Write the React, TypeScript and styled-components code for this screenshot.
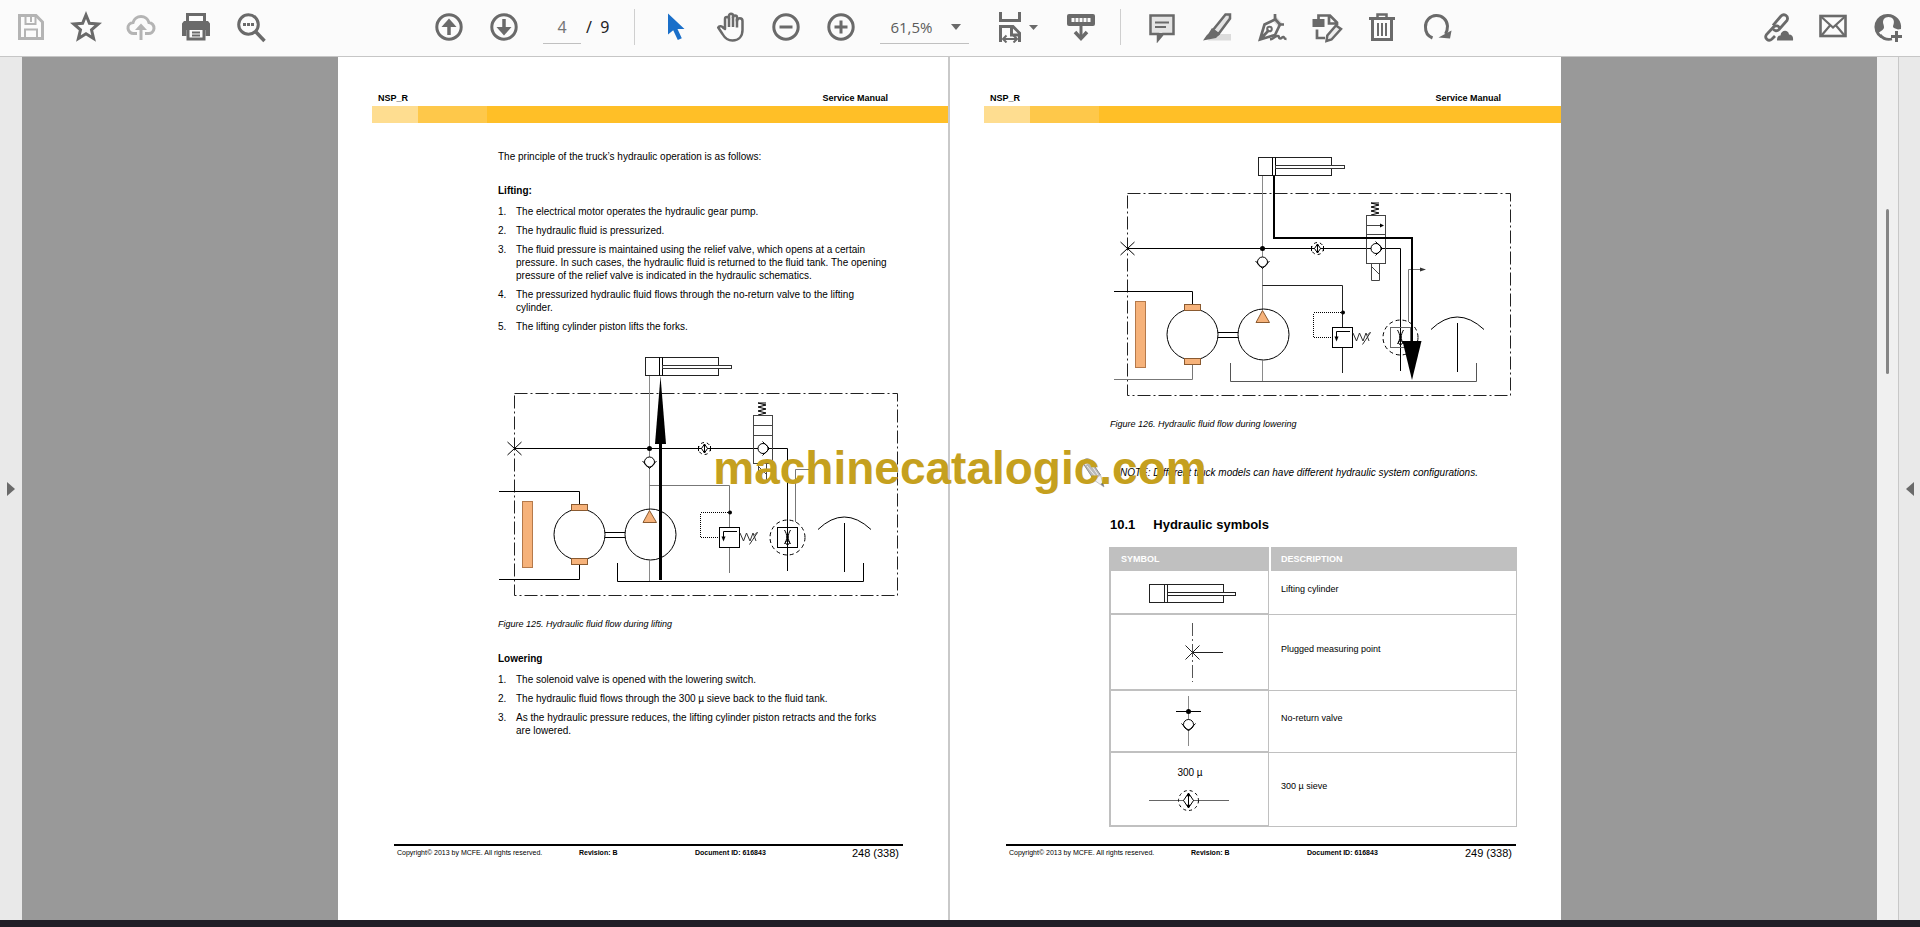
import React, { useState } from "react";
import styled, { createGlobalStyle } from "styled-components";

const GlobalStyle = createGlobalStyle`
  *, *::before, *::after { box-sizing: border-box; }
  body { margin: 0; background: #999999; }
  body, button, input, select { font-family: "Liberation Sans", Arial, sans-serif; }
`;

const INK = "#6a6a6a";
const PALE = "#b4b4b4";
const FILL = "#f6b27a";

const Shell = styled.div`
  display: flex;
  flex-direction: column;
  min-height: 100vh;
`;

/* ---------- toolbar ---------- */

const Toolbar = styled.header`
  display: flex;
  align-items: center;
  height: 57px;
  padding: 0 16px 2px 15px;
  background: #fbfbfb;
  border-bottom: 1px solid #c6c6c6;
`;

const ToolGroup = styled.div<{ $push?: boolean }>`
  display: flex;
  align-items: center;
  gap: 23px;
  margin-left: ${(p) => (p.$push ? "auto" : "0")};
`;

const MainTools = styled(ToolGroup)`
  margin-left: 166px;
`;

const ToolButton = styled.button<{ $pale?: boolean; $active?: boolean }>`
  display: flex;
  width: 32px;
  height: 32px;
  padding: 0;
  border: 0;
  background: none;
  color: ${(p) => (p.$active ? "#1a6fc9" : p.$pale ? PALE : INK)};
`;

const FitButton = styled(ToolButton)`
  width: 48px;
  margin-left: 2px;
`;

const Separator = styled.div`
  width: 1px;
  height: 36px;
  margin-right: 2px;
  background: #cfcfcf;
`;

const PageField = styled.div`
  display: flex;
  align-items: center;
  gap: 5px;
  padding-right: 2px;
  font: 16px "Noto Sans", "Open Sans", sans-serif;
  color: #222222;
`;

const PageInput = styled.input`
  width: 38px;
  height: 34px;
  padding: 0;
  border: 0;
  border-bottom: 1px solid #c0c0c0;
  background: transparent;
  text-align: center;
  font: 16px "Noto Sans", "Open Sans", sans-serif;
  color: #757575;
`;

const ZoomBox = styled.div`
  position: relative;
  display: flex;
  width: 89px;
`;

const ZoomSelect = styled.select`
  width: 100%;
  height: 34px;
  padding: 0 10px;
  border: 0;
  border-bottom: 1px solid #c0c0c0;
  border-radius: 0;
  background: transparent;
  appearance: none;
  font: 15px "Open Sans", "Noto Sans", sans-serif;
  color: #5c5c5c;
`;

const ZoomCaret = styled.svg`
  position: absolute;
  right: 8px;
  top: 14px;
  pointer-events: none;
`;

/* ---------- viewer ---------- */

const Viewer = styled.main`
  position: relative;
  display: flex;
  flex: 1;
  background: #999999;
`;

const Rail = styled.button<{ $right?: boolean }>`
  display: flex;
  align-items: center;
  justify-content: center;
  width: 22px;
  padding: 0;
  border: 0;
  border-left: ${(p) => (p.$right ? "1px solid #c8c8c8" : "0")};
  background: #e9e9e9;
`;

const Spread = styled.div`
  display: flex;
  flex: 1;
  justify-content: center;
`;

const ScrollTrack = styled.div`
  width: 21px;
  padding: 152px 9px 0;
  background: #f0f0f0;
`;

const ScrollThumb = styled.div`
  height: 165px;
  border-radius: 2px;
  background: #858585;
`;

const Watermark = styled.div`
  position: absolute;
  inset: 0;
  display: flex;
  align-items: center;
  justify-content: center;
  padding-bottom: 42px;
  pointer-events: none;
  font-size: 46px;
  font-weight: bold;
  color: #c5a01e;
`;

const Taskbar = styled.footer`
  height: 7px;
  background: #201f27;
`;

/* ---------- document page ---------- */

const Sheet = styled.article<{ $second?: boolean }>`
  display: flex;
  flex-direction: column;
  flex: 0 1 ${(p) => (p.$second ? "613px" : "610px")};
  border-left: ${(p) => (p.$second ? "2px solid #c9c9c9" : "0")};
  background: #ffffff;
  color: #000000;
`;

const SheetHeader = styled.header`
  display: flex;
  justify-content: space-between;
  padding: 35px 60px 2px 40px;
  font-size: 9px;
  line-height: 12px;
  font-weight: bold;
`;

const Stripe = styled.div`
  display: grid;
  grid-template-columns: 46px 69px 1fr;
  height: 17px;
  margin-left: 34px;
`;

const StripePart = styled.div<{ $color: string }>`
  background: ${(p) => p.$color};
`;

const SheetBody = styled.div`
  padding: 27px 44px 0 160px;
  font-size: 10px;
  line-height: 13px;
`;

const Para = styled.p`
  margin: 0;
`;

const SubHeading = styled.h3`
  margin: 21px 0 8px;
  font-size: 10px;
  line-height: 13px;
`;

const Steps = styled.ol`
  display: flex;
  flex-direction: column;
  gap: 6px;
  margin: 0;
  padding: 0 15px 0 0;
  list-style: none;
  counter-reset: step;
`;

const Step = styled.li`
  display: grid;
  grid-template-columns: 18px 1fr;
  counter-increment: step;
  &::before { content: counter(step) "."; }
`;

const Figure = styled.figure<{ $top: number }>`
  margin: ${(p) => p.$top}px 0 0;
  svg { display: block; }
`;

const Caption = styled.figcaption`
  margin-top: 19px;
  font-size: 9px;
  font-style: italic;
`;

const Note = styled.p`
  display: flex;
  align-items: center;
  gap: 15px;
  height: 31px;
  margin: 26px 0 0 -29px;
  font-style: italic;
  white-space: nowrap;
`;

const SectionHeading = styled.h2`
  display: flex;
  gap: 18px;
  margin: 28px 0 13px;
  font-size: 13px;
  line-height: 18px;
`;

const SymbolTable = styled.table`
  width: 408px;
  margin-left: -1px;
  border-spacing: 0;
  table-layout: fixed;
  font-size: 9px;
`;

const HeadCell = styled.th<{ $wide?: boolean }>`
  width: ${(p) => (p.$wide ? "auto" : "160px")};
  height: 24px;
  padding: 0 10px 0 ${(p) => (p.$wide ? "10px" : "12px")};
  background: #c0c0c0;
  border-left: ${(p) => (p.$wide ? "2px solid #ffffff" : "0")};
  color: #ffffff;
  text-align: left;
`;

const SymbolCell = styled.td`
  padding: 0;
  border: solid #c0c0c0;
  border-width: 0 1px 2px 2px;
  svg { display: block; }
`;

const TextCell = styled.td`
  padding: 0 12px 6px;
  border: solid #c0c0c0;
  border-width: 0 1px 1px 0;
`;

const SheetFooter = styled.footer`
  display: grid;
  grid-template-columns: 182px 116px 1fr auto;
  align-items: center;
  margin: auto 45px 60px 56px;
  padding: 0 4px 0 3px;
  border-top: 2px solid #000000;
  font-size: 7px;
  line-height: 14px;
`;

const PageNumber = styled.span`
  font-size: 11px;
`;

/* ---------- toolbar drawings ---------- */

const Icon = ({ children, w = 32 }: { children: React.ReactNode; w?: number }) => (
  <svg width={w} height="32" viewBox={`0 0 ${w} 32`} fill="none" stroke="currentColor" strokeWidth="3" aria-hidden="true">
    {children}
  </svg>
);

const SaveIcon = () => (
  <Icon>
    <path d="M4.500 4.500H21l6.500 6.500V27.500H4.500Z" strokeWidth="3" />
    <path d="M10.500 5v8h10V5M10 27v-8.500h12V27" strokeWidth="2" />
    <path d="M16 6v5" strokeWidth="2" />
  </Icon>
);
const StarIcon = () => (
  <Icon><path d="M16 4l3.400 8.300 8.900.7-6.800 5.800 2.100 8.700L16 22.800 8.400 27.500l2.100-8.700L3.700 13l8.900-.7Z" strokeWidth="3" /></Icon>
);
const CloudIcon = () => (
  <Icon>
    <path d="M12 22.500H9a5.500 5.500 0 0 1-1-11 8.300 8.300 0 0 1 16 0 5.500 5.500 0 0 1-1 11h-3" strokeWidth="3" />
    <path d="M16 29V17" />
    <path d="M10 19l6-6.500 6 6.500Z" fill="currentColor" stroke="none" />
  </Icon>
);
const PrintIcon = () => (
  <Icon>
    <path d="M7.500 11v-7.500h17v7.500" />
    <path d="M4 10h24l2 2.500V25h-4.500v-6h-19v6H2V12.500Z" fill="currentColor" stroke="none" />
    <path d="M8 18.500v9.500h16v-9.500" strokeWidth="3" />
    <path d="M12 21.500h8M12 24.500h8" strokeWidth="2" />
  </Icon>
);
const SearchIcon = () => (
  <Icon>
    <circle cx="13.500" cy="13.500" r="9.800" />
    <path d="M20.500 20.500l9 9.500" strokeWidth="3.500" />
    <path d="M8 13.500h3M12 13.500h3M16 13.500h3" />
  </Icon>
);
const ArrowIcon = ({ down }: { down?: boolean }) => (
  <Icon>
    <circle cx="16" cy="16" r="12.200" />
    <g transform={down ? "rotate(180 16 16)" : undefined}>
      <path d="M16 24V12" strokeWidth="3.500" />
      <path d="M8.500 16l7.500-8.500 7.500 8.500Z" fill="currentColor" stroke="none" />
    </g>
  </Icon>
);
const CursorIcon = () => (
  <Icon><path d="M8 2.500v21l5.200-4.300 4.600 9.800 4-1.700-4.300-9.300H24.500Z" fill="currentColor" stroke="none" /></Icon>
);
const HandIcon = () => (
  <Icon>
    <path d="M10 18V8a2 2 0 0 1 4 0V4.800a2 2 0 0 1 4 0V6.500a2 2 0 0 1 4 0V10a2 2 0 0 1 5.500 0v9c0 6-3.500 10.500-10 10.500-5.500 0-8-3-10-6.500l-4.300-6.500c1-2 4-1.500 5.300.5Z" strokeWidth="2.500" strokeLinejoin="round" />
    <path d="M14 7.500V16M18 6v10M22 8v8.500" strokeWidth="2.500" />
  </Icon>
);
const RoundIcon = ({ plus }: { plus?: boolean }) => (
  <Icon>
    <circle cx="16" cy="16" r="12.200" />
    <path d={plus ? "M9.500 16h13M16 9.500v13" : "M9.500 16h13"} />
  </Icon>
);
const FitIcon = () => (
  <Icon w={44}>
    <path d="M6.500 1v8.500h19V1" />
    <path d="M6.500 31V15.500H19l6.500 6.500v9M17.500 16v8h8" strokeWidth="3" />
    <path d="M9 28h14M12.500 24.500L9 28l3.500 3.500M19.500 24.500L23 28l-3.500 3.500" strokeWidth="2" />
    <path d="M35 14h9l-4.500 5Z" fill="currentColor" stroke="none" />
  </Icon>
);
const ScrollIcon = () => (
  <Icon>
    <rect x="2" y="3" width="28" height="12" rx="2" fill="currentColor" stroke="none" />
    <path d="M6.500 9h19" stroke="#fbfbfb" strokeWidth="4" strokeDasharray="3 1" />
    <path d="M16 15v12" />
    <path d="M10 21l6 6.500 6-6.500" strokeWidth="3.500" />
  </Icon>
);
const CommentIcon = () => (
  <Icon>
    <path d="M4.500 4.500h23v18.500H17l-5 6v-6H4.500Z" fill="#e4e4e4" strokeWidth="2.500" />
    <path d="M12 22h6l-6 7Z" fill="currentColor" stroke="none" />
    <path d="M9 11.500h14M9 16h11" strokeWidth="2" />
  </Icon>
);
const MarkerIcon = () => (
  <Icon>
    <path d="M11 23h19v6.500H7Z" fill="#dcdcdc" stroke="none" />
    <path d="M24.500 3.500h4.500v4L17.500 23l-5.500-4Z" fill="#e4e4e4" strokeWidth="2.500" />
    <path d="M11 17l8 6-4 4-13 2.500 3.500-5 2-2Z" fill="currentColor" stroke="none" />
  </Icon>
);
const SignIcon = () => (
  <Icon>
    <path d="M20 5l7 8-4 4-7-8Z" fill="#dedede" stroke="none" />
    <path d="M19 3v5.500L8.500 13.500 4 28.500l15-4.500 5-10.500h4M4 28.500l9-9.500" strokeWidth="2.700" />
    <circle cx="13.500" cy="18" r="2.300" strokeWidth="2" />
    <path d="M19 8l5 5.500" strokeWidth="2.700" />
    <path d="M14 28.500c4-1 5-4 8-3.500 2 .3 0 2.500 2 2.500s2-2 3.500-1.500 0 2 3 2" strokeWidth="2.500" />
  </Icon>
);
const EditIcon = () => (
  <Icon>
    <path d="M7.500 8V4.500H19l7 7V14M18 5v7.500h8" strokeWidth="2.700" />
    <rect x="1.500" y="8" width="12" height="8" fill="currentColor" stroke="none" />
    <path d="M6 18.500V27h8" strokeWidth="2.700" />
    <path d="M25 14.500l5 3.500-9.500 10.500-5 1.500.8-5.500Z" fill="#eeeeee" strokeWidth="2.500" />
  </Icon>
);
const TrashIcon = () => (
  <Icon>
    <path d="M3 7.500h26" />
    <path d="M11.500 7V3.500h9V7" strokeWidth="2.500" />
    <path d="M6.500 9v19.500h19V9" />
    <path d="M12 12v13M16 12v13M20 12v13" strokeWidth="2" />
  </Icon>
);
const RotateIcon = () => (
  <Icon>
    <path d="M11.500 27A11.500 11.500 0 0 1 4.500 16 11 11 0 0 1 26.500 15c0 3-.5 5.500-2 8" />
    <path d="M30.500 19.500l-1.500 8-11.500-1Z" fill="currentColor" stroke="none" />
  </Icon>
);
const LinkIcon = () => (
  <Icon>
    <path d="M11 14.500l8-9.500c3-3 8 0 6 4.500l-8 9c-2 2-4.500 1.500-6-.5" strokeWidth="2.800" />
    <path d="M18 17.500c-1-3-4.500-3.500-6.500-1.500l-7 7.500c-2.500 4 2 7.500 5.500 4.500l3-3" strokeWidth="2.800" />
    <path d="M15 29.500c0-4 1.500-5 3.500-5 .5-6 8-6 8.500-1 3 0 4.500 2 4 6Z" fill="currentColor" stroke="none" />
  </Icon>
);
const MailIcon = () => (
  <Icon>
    <rect x="3.500" y="5" width="25" height="20" strokeWidth="2.600" />
    <path d="M4.500 6L16 16.500 27.500 6M4.500 24.500l8.500-10M27.500 24.500l-8.500-10" strokeWidth="2.200" />
  </Icon>
);
const UserIcon = () => (
  <Icon>
    <path d="M20 28A12.200 12.200 0 0 1 8 24" strokeWidth="2.800" />
    <path fillRule="evenodd" d="M16 3a13 13 0 0 1 13 15l-3 .5-4-1.500c-1.500-1-1-2-.5-3.500 1.500-4.500-1-7.500-5-7.500s-6.500 3-5 7.500c.7 2.500 1 4-1 5.500L7 21.500l3.500 4.500-2 1A13 13 0 0 1 16 3Z" fill="currentColor" stroke="none" />
    <path d="M19 25.500h11M24.500 20v11" strokeWidth="3" />
  </Icon>
);

/* ---------- schematics ---------- */

const Sieve = ({ x, y, r }: { x: number; y: number; r: number }) => (
  <g>
    <circle cx={x} cy={y} r={r} fill="none" strokeDasharray="3 3" />
    <path d={`M${x} ${y - r * 0.75}L${x + r * 0.5} ${y}L${x} ${y + r * 0.75}L${x - r * 0.5} ${y}Z`} fill="#fff" />
    <path d={`M${x} ${y - r * 0.7}V${y + r * 0.7}`} />
    <path d={`M${x - 1.5} ${y - r * 0.4}L${x} ${y - r * 0.7}L${x + 1.5} ${y - r * 0.4}M${x - 1.5} ${y + r * 0.4}L${x} ${y + r * 0.7}L${x + 1.5} ${y + r * 0.4}`} />
  </g>
);

const CheckValve = ({ x, y }: { x: number; y: number }) => (
  <g>
    <circle cx={x} cy={y} r="5" fill="#fff" />
    <path d={`M${x - 7} ${y - 1}L${x} ${y + 6.5}L${x + 7} ${y - 1}`} fill="none" />
  </g>
);

const Schematic = ({ lowering }: { lowering?: boolean }) => (
  <svg
    width="404"
    height="244"
    viewBox={`${lowering ? 17 : 18} 10 404 244`}
    fill="none"
    stroke="#000"
    role="img"
    aria-label={lowering ? "Fluid flow during lowering" : "Fluid flow during lifting"}
  >
    <rect x="34.500" y="48.500" width="383" height="202" stroke="#222" strokeDasharray="13 3 2 3" />
    <rect x="165.500" y="12.500" width="73" height="18" stroke="#222" />
    <path d="M179.500 12.500v18M182.500 12.500v18" />
    <rect x="182.500" y="20.500" width="69" height="3" fill="#fff" stroke="#333" />
    <path d="M169.500 31v134M169.500 215.500v21" stroke="#8a8a8a" />
    <path d="M34.500 103.500h273V226" />
    <path d="M27.500 97l14 13M41.500 97l-14 13" />
    <circle cx="169.500" cy="103.500" r="2.500" fill="#000" stroke="none" />
    <CheckValve x={169.5} y={117} />
    <Sieve x={224.5} y={103.5} r={6} />
    <path d="M218.500 101v5M230.500 101v5" />
    <path d="M278 70l8-2-8-2 8-2-8-2 8-2-8-2h8" />
    <rect x="273.500" y="70.500" width="19" height="48" stroke="#444" />
    <path d={lowering ? "M273.500 80.500h14M273.500 89.500h19" : "M273.500 80.500h19M273.500 90.500h19"} stroke="#444" />
    {lowering && <path d="M287 78.500l4 2-4 2Z" fill="#000" stroke="none" />}
    <path d="M278.500 118.500v17h8v-17M279 122l7 7" stroke="#444" />
    <circle cx="283" cy="103.500" r="5" fill="#fff" />
    <path d="M282.500 96.500l7 7-7 7" />
    <path d="M169.500 140.500h80v42M249.500 202.500V228" stroke={lowering ? "#222" : "#777"} />
    <path d="M249.500 167.500h-29v25h19" strokeDasharray="1 1" shapeRendering="crispEdges" />
    <circle cx="250" cy="167.500" r="2" fill="#000" stroke="none" />
    <rect x="239.500" y="182.500" width="20" height="20" />
    <path d="M257 186.500h-13.500V195" />
    <path d="M241.500 191.500h4l-2 5Z" fill="#000" stroke="none" />
    <path d="M260 188l3.500 8 3-8 3.500 8 3-8 3 8M269.500 199.500l8-12M274.500 190l3-3" stroke="#333" />
    <circle cx="307.500" cy="192.500" r="17.500" strokeDasharray="4 3" />
    <rect x="297.500" y="182.500" width="20" height="20" stroke={lowering ? "#666" : "#000"} />
    <path d="M304.500 185c3 5 3 9 0 14M310.500 185c-3 5-3 9 0 14" />
    <circle cx="307.500" cy="197.500" r="2" />
    <path d="M315.500 177v-52.500h14" stroke="#777" />
    {lowering && <path d="M327 122.500l6 2-6 2Z" fill="#333" stroke="none" />}
    <path d="M338 184.500q26-25 53 0M364.500 178v49" />
    <path d="M137.500 218v18.500h246V218" stroke={lowering ? "#555" : "#000"} />
    <path d={lowering ? "M21 146.500h78.500V160" : "M19 146.500h80.500V160"} />
    <path d={lowering ? "M99.500 219v15.500H21" : "M99.500 219v15.500H19"} stroke={lowering ? "#777" : "#000"} />
    <circle cx="99.500" cy="189.500" r="25.500" fill="#fff" />
    <rect x="91.500" y="159.500" width="16" height="6" fill={FILL} stroke="#8a5a30" />
    <rect x="91.500" y="213.500" width="16" height="6" fill={FILL} stroke="#8a5a30" />
    <rect x="42.500" y="156.500" width="10" height="66" fill={FILL} stroke="#b5794a" />
    <path d="M125 187.500h20M125 192.500h20" />
    <circle cx="170.500" cy="189.500" r="25.500" />
    <path d="M169.500 165.500l-6.500 12h13.500Z" fill={FILL} stroke="#8a5a30" />
    {lowering ? (
      <>
        <path d="M181 31v62h138v104" strokeWidth="2" />
        <path d="M309.500 196h19L319 235Z" fill="#000" stroke="none" />
      </>
    ) : (
      <>
        <path d="M180.500 98v137" strokeWidth="3" />
        <path d="M180.500 31l5.500 68h-11Z" fill="#000" stroke="none" />
      </>
    )}
  </svg>
);

const CylinderSymbol = () => (
  <svg width="157" height="42" fill="none" stroke="#222" aria-hidden="true">
    <rect x="38.500" y="13.500" width="74" height="18" />
    <path d="M53.500 13.500v18M56.500 13.500v18" />
    <rect x="56.500" y="21.500" width="68" height="3" fill="#fff" />
  </svg>
);
const MeasuringSymbol = () => (
  <svg width="157" height="74" fill="none" stroke="#222" aria-hidden="true">
    <path d="M81.500 8v59" stroke="#555" strokeDasharray="13 3 2 3" />
    <path d="M81.500 37.500H112M74.500 30.500l14 14M88.500 30.500l-14 14" />
  </svg>
);
const ValveSymbol = () => (
  <svg width="157" height="60" fill="none" stroke="#000" aria-hidden="true">
    <path d="M77.500 5v50" stroke="#8a8a8a" />
    <path d="M65 20.500h25" />
    <circle cx="77.500" cy="20.500" r="2.500" fill="#000" stroke="none" />
    <CheckValve x={77.5} y={33.5} />
  </svg>
);
const SieveSymbol = () => (
  <svg width="157" height="72" fill="none" stroke="#000" aria-hidden="true">
    <text x="79" y="23" textAnchor="middle" fontSize="10" fill="#000" stroke="none">300 µ</text>
    <path d="M38 47.500h80" stroke="#666" />
    <Sieve x={77.5} y={47.5} r={10} />
  </svg>
);

const Pencil = () => (
  <svg width="24" height="31" viewBox="0 0 24 31" fill="#b9b9b9" stroke="#8d8d8d" aria-hidden="true">
    <path d="M1.500 5.500Q4 0 9 2.500L19.500 18 13 23Z" />
    <path d="M4 8l8-5M6 9l10 12M9 6l8 12" stroke="#eeeeee" />
    <path d="M13 23l6.500-5L23 30Z" fill="#f3f3f3" stroke="#c5c5c5" />
    <path d="M19.500 27l2.500-1.500 1 4.500Z" fill="#777" stroke="none" />
  </svg>
);

const symbols = [
  { label: "Lifting cylinder", drawing: <CylinderSymbol /> },
  { label: "Plugged measuring point", drawing: <MeasuringSymbol /> },
  { label: "No-return valve", drawing: <ValveSymbol /> },
  { label: "300 µ sieve", drawing: <SieveSymbol /> },
];

const ManualPage = ({ number, second, children }: { number: number; second?: boolean; children: React.ReactNode }) => (
  <Sheet $second={second}>
    <SheetHeader>
      <span>NSP_R</span>
      <span>Service Manual</span>
    </SheetHeader>
    <Stripe>
      <StripePart $color="#fedd90" />
      <StripePart $color="#fec84a" />
      <StripePart $color="#ffbf27" />
    </Stripe>
    <SheetBody>{children}</SheetBody>
    <SheetFooter>
      <span>Copyright© 2013 by MCFE. All rights reserved.</span>
      <b>Revision: B</b>
      <b>Document ID: 616843</b>
      <PageNumber>{number} (338)</PageNumber>
    </SheetFooter>
  </Sheet>
);

export default function App() {
  const [page, setPage] = useState("4");
  return (
    <Shell>
      <GlobalStyle />
      <Toolbar>
        <ToolGroup>
          <ToolButton $pale aria-label="Save"><SaveIcon /></ToolButton>
          <ToolButton aria-label="Star"><StarIcon /></ToolButton>
          <ToolButton $pale aria-label="Upload"><CloudIcon /></ToolButton>
          <ToolButton aria-label="Print"><PrintIcon /></ToolButton>
          <ToolButton aria-label="Find"><SearchIcon /></ToolButton>
        </ToolGroup>
        <MainTools>
          <ToolButton aria-label="Previous page"><ArrowIcon /></ToolButton>
          <ToolButton aria-label="Next page"><ArrowIcon down /></ToolButton>
          <PageField>
            <PageInput aria-label="Page number" value={page} onChange={(e) => setPage(e.target.value)} />
            <span>/&nbsp; 9</span>
          </PageField>
          <Separator />
          <ToolButton $active aria-label="Select"><CursorIcon /></ToolButton>
          <ToolButton aria-label="Pan"><HandIcon /></ToolButton>
          <ToolButton aria-label="Zoom out"><RoundIcon /></ToolButton>
          <ToolButton aria-label="Zoom in"><RoundIcon plus /></ToolButton>
          <ZoomBox>
            <ZoomSelect aria-label="Zoom level" defaultValue="61,5%">
              <option>61,5%</option>
              <option>100%</option>
            </ZoomSelect>
            <ZoomCaret width="10" height="6"><path d="M0 0h10L5 6Z" fill={INK} /></ZoomCaret>
          </ZoomBox>
          <FitButton aria-label="Fit page"><FitIcon /></FitButton>
          <ToolButton aria-label="Scrolling mode"><ScrollIcon /></ToolButton>
          <Separator />
          <ToolButton aria-label="Comment"><CommentIcon /></ToolButton>
          <ToolButton aria-label="Highlight"><MarkerIcon /></ToolButton>
          <ToolButton aria-label="Sign"><SignIcon /></ToolButton>
          <ToolButton aria-label="Edit page"><EditIcon /></ToolButton>
          <ToolButton aria-label="Delete"><TrashIcon /></ToolButton>
          <ToolButton aria-label="Rotate"><RotateIcon /></ToolButton>
        </MainTools>
        <ToolGroup $push>
          <ToolButton aria-label="Share link"><LinkIcon /></ToolButton>
          <ToolButton aria-label="Send by email"><MailIcon /></ToolButton>
          <ToolButton aria-label="Add people"><UserIcon /></ToolButton>
        </ToolGroup>
      </Toolbar>

      <Viewer>
        <Rail aria-label="Open left pane">
          <svg width="8" height="14"><path d="M0 0v14l8-7Z" fill={INK} /></svg>
        </Rail>
        <Spread>
          <ManualPage number={248}>
            <Para>The principle of the truck’s hydraulic operation is as follows:</Para>
            <SubHeading>Lifting:</SubHeading>
            <Steps>
              <Step>The electrical motor operates the hydraulic gear pump.</Step>
              <Step>The hydraulic fluid is pressurized.</Step>
              <Step>The fluid pressure is maintained using the relief valve, which opens at a certain pressure. In such cases, the hydraulic fluid is returned to the fluid tank. The opening pressure of the relief valve is indicated in the hydraulic schematics.</Step>
              <Step>The pressurized hydraulic fluid flows through the no-return valve to the lifting cylinder.</Step>
              <Step>The lifting cylinder piston lifts the forks.</Step>
            </Steps>
            <Figure $top={22}>
              <Schematic />
              <Caption>Figure 125. Hydraulic fluid flow during lifting</Caption>
            </Figure>
            <SubHeading>Lowering</SubHeading>
            <Steps>
              <Step>The solenoid valve is opened with the lowering switch.</Step>
              <Step>The hydraulic fluid flows through the 300 µ sieve back to the fluid tank.</Step>
              <Step>As the hydraulic pressure reduces, the lifting cylinder piston retracts and the forks are lowered.</Step>
            </Steps>
          </ManualPage>
          <ManualPage number={249} second>
            <Figure $top={5}>
              <Schematic lowering />
              <Caption>Figure 126. Hydraulic fluid flow during lowering</Caption>
            </Figure>
            <Note>
              <Pencil />
              <span>NOTE: Different truck models can have different hydraulic system configurations.</span>
            </Note>
            <SectionHeading>
              <span>10.1</span>
              <span>Hydraulic symbols</span>
            </SectionHeading>
            <SymbolTable>
              <thead>
                <tr>
                  <HeadCell>SYMBOL</HeadCell>
                  <HeadCell $wide>DESCRIPTION</HeadCell>
                </tr>
              </thead>
              <tbody>
                {symbols.map((s) => (
                  <tr key={s.label}>
                    <SymbolCell>{s.drawing}</SymbolCell>
                    <TextCell>{s.label}</TextCell>
                  </tr>
                ))}
              </tbody>
            </SymbolTable>
          </ManualPage>
        </Spread>
        <ScrollTrack><ScrollThumb /></ScrollTrack>
        <Rail $right aria-label="Open right pane">
          <svg width="8" height="14"><path d="M8 0v14L0 7Z" fill={INK} /></svg>
        </Rail>
        <Watermark>machinecatalogic.com</Watermark>
      </Viewer>
      <Taskbar />
    </Shell>
  );
}
